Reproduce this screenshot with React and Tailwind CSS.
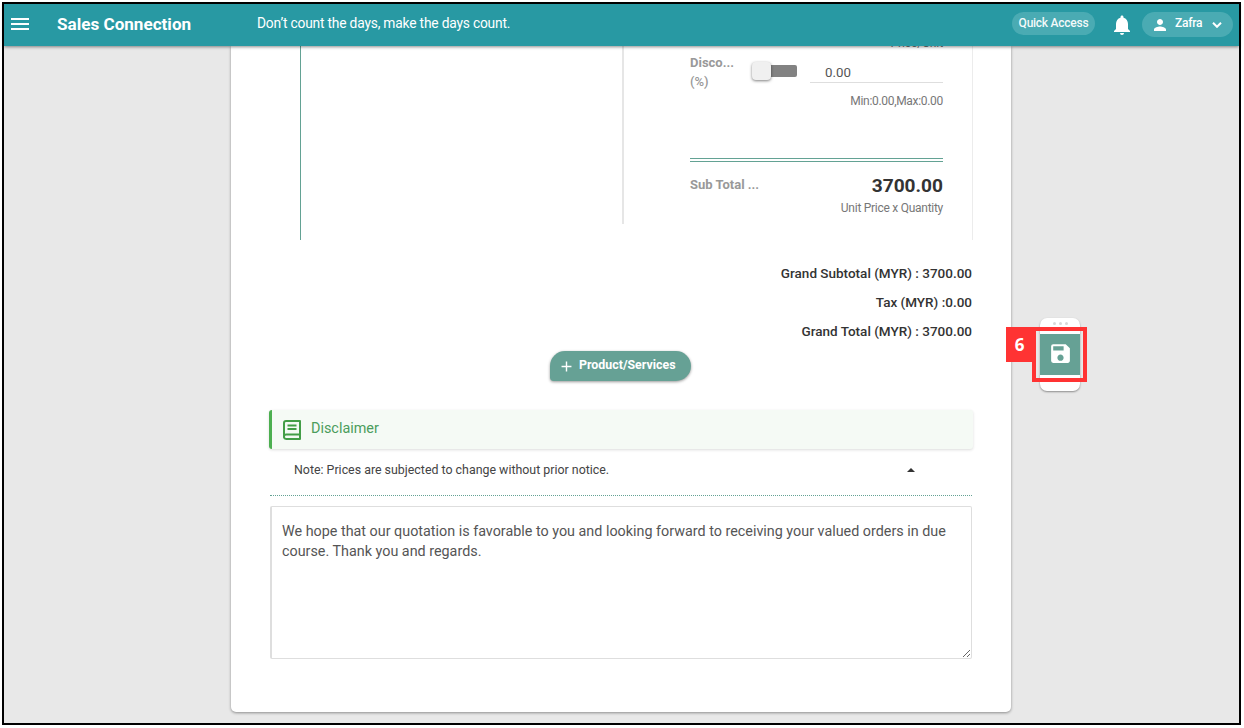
import { MdNotifications, MdPerson, MdSave, MdAdd } from 'react-icons/md';

function Header() {
  return (
    <header className="relative z-10 flex h-[42px] shrink-0 items-center bg-[#2899a3] text-white shadow-[0_1px_3px_rgba(0,0,0,0.45)]">
      <svg viewBox="0 0 18 12" className="-mt-[2px] ml-[7px] h-[12px] w-[18px]" fill="currentColor" aria-hidden="true">
        <path d="M0 0h18v2H0zM0 5h18v2H0zM0 10h18v2H0z" />
      </svg>
      <h1 className="-mt-[3px] ml-[28px] w-[200px] text-[17.1px] leading-5 font-bold whitespace-nowrap">Sales Connection</h1>
      <p className="-mt-[4px] text-[13.8px] leading-5 tracking-[-0.2px] whitespace-nowrap text-white">Don’t count the days, make the days count.</p>
      <div className="ml-auto flex items-center pr-[6px]">
        <div className="-mt-[3px] flex h-[23px] w-[83px] items-center justify-center rounded-full bg-[#4aabb3] pb-[2px] text-[12px] font-medium tracking-[-0.25px] text-white/95">Quick Access</div>
        <MdNotifications className="ml-[15px] h-[24px] w-[24px]" />
        <div className="-mt-px ml-[8px] flex h-[25px] w-[91px] items-center rounded-full bg-[#4aabb3] pl-[9px]">
          <MdPerson className="h-[18px] w-[18px]" />
          <span className="-mt-[3px] ml-[6px] w-[37px] text-[12px] font-medium tracking-[-0.25px]">Zafra</span>
          <svg viewBox="0 0 10 6" className="h-[6px] w-[10px]" fill="none" stroke="currentColor" strokeWidth="2" aria-hidden="true">
            <path d="m1 .8 4 4 4-4" />
          </svg>
        </div>
      </div>
    </header>
  );
}

function PricePanel() {
  return (
    <section className="ml-[31px] flex h-[194px] w-[673px] shrink-0 overflow-hidden border-r border-l border-r-[#ececec] border-l-[#63a294]">
      <div className="h-[178px] w-[323px] border-r-2 border-[#e6e6e6]" />
      <div className="ml-[66px] flex w-[253px] flex-col">
        <div className="-mt-[11px] h-[16px] text-right text-[12px] leading-4 tracking-[-0.1px] text-[#777]">Price/Unit</div>
        <div className="mt-px flex h-[40px] items-start">
          <div className="w-[62px] pt-px text-[13px] leading-[19px] text-[#999]">
            <div className="font-bold">Disco...</div>
            <div className="font-medium">(%)</div>
          </div>
          <div className="mt-[10px] flex items-center">
            <div className="z-1 h-[18px] w-[19px] rounded-[4px] bg-[#f0f0f0] shadow-[0_1px_3px_rgba(0,0,0,0.5)]" />
            <div className="-ml-[4px] h-[12px] w-[30px] rounded-[2px] bg-[#828282]" />
          </div>
          <div className="mt-[9px] ml-auto h-[22px] w-[133px] border-b border-[#dedede] pl-[15px] text-[13.3px] leading-[23px] text-[#555]">0.00</div>
        </div>
        <div className="h-[20px] text-right text-[12px] leading-[19px] tracking-[-0.31px] text-[#777]">Min:0.00,Max:0.00</div>
        <div className="mt-[46px] h-[4px] border-y border-[#63a294]" />
        <div className="mt-[12px] flex h-[22px] items-center justify-between">
          <span className="-mt-px text-[13px] font-bold text-[#999]">Sub Total ...</span>
          <span className="mt-[2px] text-[19.1px] font-bold text-[#333]">3700.00</span>
        </div>
        <div className="mt-[3px] text-right text-[12px] leading-[18px] tracking-[-0.27px] text-[#777]">Unit Price x Quantity</div>
      </div>
    </section>
  );
}

function Disclaimer() {
  return (
    <section className="mt-[29px]">
      <div className="flex h-[39px] w-[704px] items-center rounded-[3px] border-l-[3px] border-[#4caf50] bg-[#f5faf5] pl-[11px] shadow-[0_1px_3px_rgba(0,0,0,0.14)]">
        <svg viewBox="0 0 18 20" className="h-[20px] w-[18px]" fill="none" stroke="#439d47" strokeWidth="2" strokeLinejoin="round" aria-hidden="true">
          <path d="M17 14.5H3.2a2.2 2.2 0 0 0 0 4.5H17V1H3a2 2 0 0 0-2 2v14" />
          <path d="M4.5 5.4h9M4.5 9h9" />
        </svg>
        <span className="-mt-px ml-[10px] text-[14.4px] text-[#4b9d5c]">Disclaimer</span>
      </div>
      <div className="ml-px flex h-[47px] w-[702px] items-center border-b border-dotted border-[#63a294] pr-[57px] pb-[3px] pl-[24px] text-[12.4px] text-[#444]">
        <span>Note: Prices are subjected to change without prior notice.</span>
        <svg viewBox="0 0 8 4" className="-mt-[2px] ml-auto h-[4px] w-[8px]" fill="#333" aria-hidden="true">
          <path d="M0 4 4 0l4 4z" />
        </svg>
      </div>
      <textarea
        className="mt-[10px] ml-px block h-[153px] w-[702px] resize rounded-[2px] border border-l-2 border-[#dedede] px-[10px] py-[15px] text-[14.35px] leading-[20px] text-[#555] outline-none"
        defaultValue="We hope that our quotation is favorable to you and looking forward to receiving your valued orders in due course. Thank you and regards."
      />
    </section>
  );
}

function SaveWidget() {
  return (
    <aside className="mt-[272px] -ml-[5px] flex h-[73px] items-start">
      <div className="mt-[9px] flex h-[35px] w-[27px] items-center justify-center bg-[#ff3333] font-['Open_Sans',sans-serif] text-[17px] font-bold text-white">6</div>
      <div className="relative ml-[7px] flex h-[73px] w-[40px] flex-col items-center rounded-[7px] bg-white shadow-[0_1px_2px_rgba(0,0,0,0.4)]">
        <div className="flex h-[16px] gap-[3px] pt-[4px]">
          <i className="h-[3px] w-[3px] rounded-full bg-[#d8d8d8]" />
          <i className="h-[3px] w-[3px] rounded-full bg-[#d8d8d8]" />
          <i className="h-[3px] w-[3px] rounded-full bg-[#d8d8d8]" />
        </div>
        <div className="flex h-[41px] w-[40px] items-center justify-center bg-[#66a195] pb-[2px] text-white">
          <MdSave className="h-[25px] w-[25px]" />
        </div>
        <div className="absolute top-[9px] -left-[8px] h-[55px] w-[55px] border-4 border-[#ff3333]" />
      </div>
    </aside>
  );
}

export default function App() {
  return (
    <div className="h-[728px] w-[1244px] overflow-hidden bg-white p-[2px] font-[Roboto,sans-serif]">
      <div className="flex h-[723px] w-[1239px] flex-col border-2 border-black bg-[#e8e8e8]">
        <Header />
        <main className="flex min-h-0 flex-1 items-start overflow-hidden">
          <div className="ml-[227px] flex h-[666px] w-[780px] shrink-0 flex-col rounded-b-[5px] bg-white pr-[38px] pl-[38px] shadow-[0_1px_3px_rgba(0,0,0,0.4)]">
            <PricePanel />
            <div className="mt-[19px] w-[703px] text-right text-[13.5px] leading-[29px] font-medium text-[#333]">
              <p>Grand Subtotal (MYR) : 3700.00</p>
              <p>Tax (MYR) :0.00</p>
              <p>Grand Total (MYR) : 3700.00</p>
            </div>
            <button className="mt-[5px] ml-[281px] flex h-[30px] w-[141px] items-center rounded-[16px] rounded-bl-[4px] bg-[#66a195] pl-[8px] text-white shadow-[0_1px_3px_rgba(0,0,0,0.4)]">
              <MdAdd className="h-[17px] w-[17px]" />
              <span className="-mt-px ml-[4px] text-[12.4px] font-bold">Product/Services</span>
            </button>
            <Disclaimer />
          </div>
          <SaveWidget />
        </main>
      </div>
    </div>
  );
}
